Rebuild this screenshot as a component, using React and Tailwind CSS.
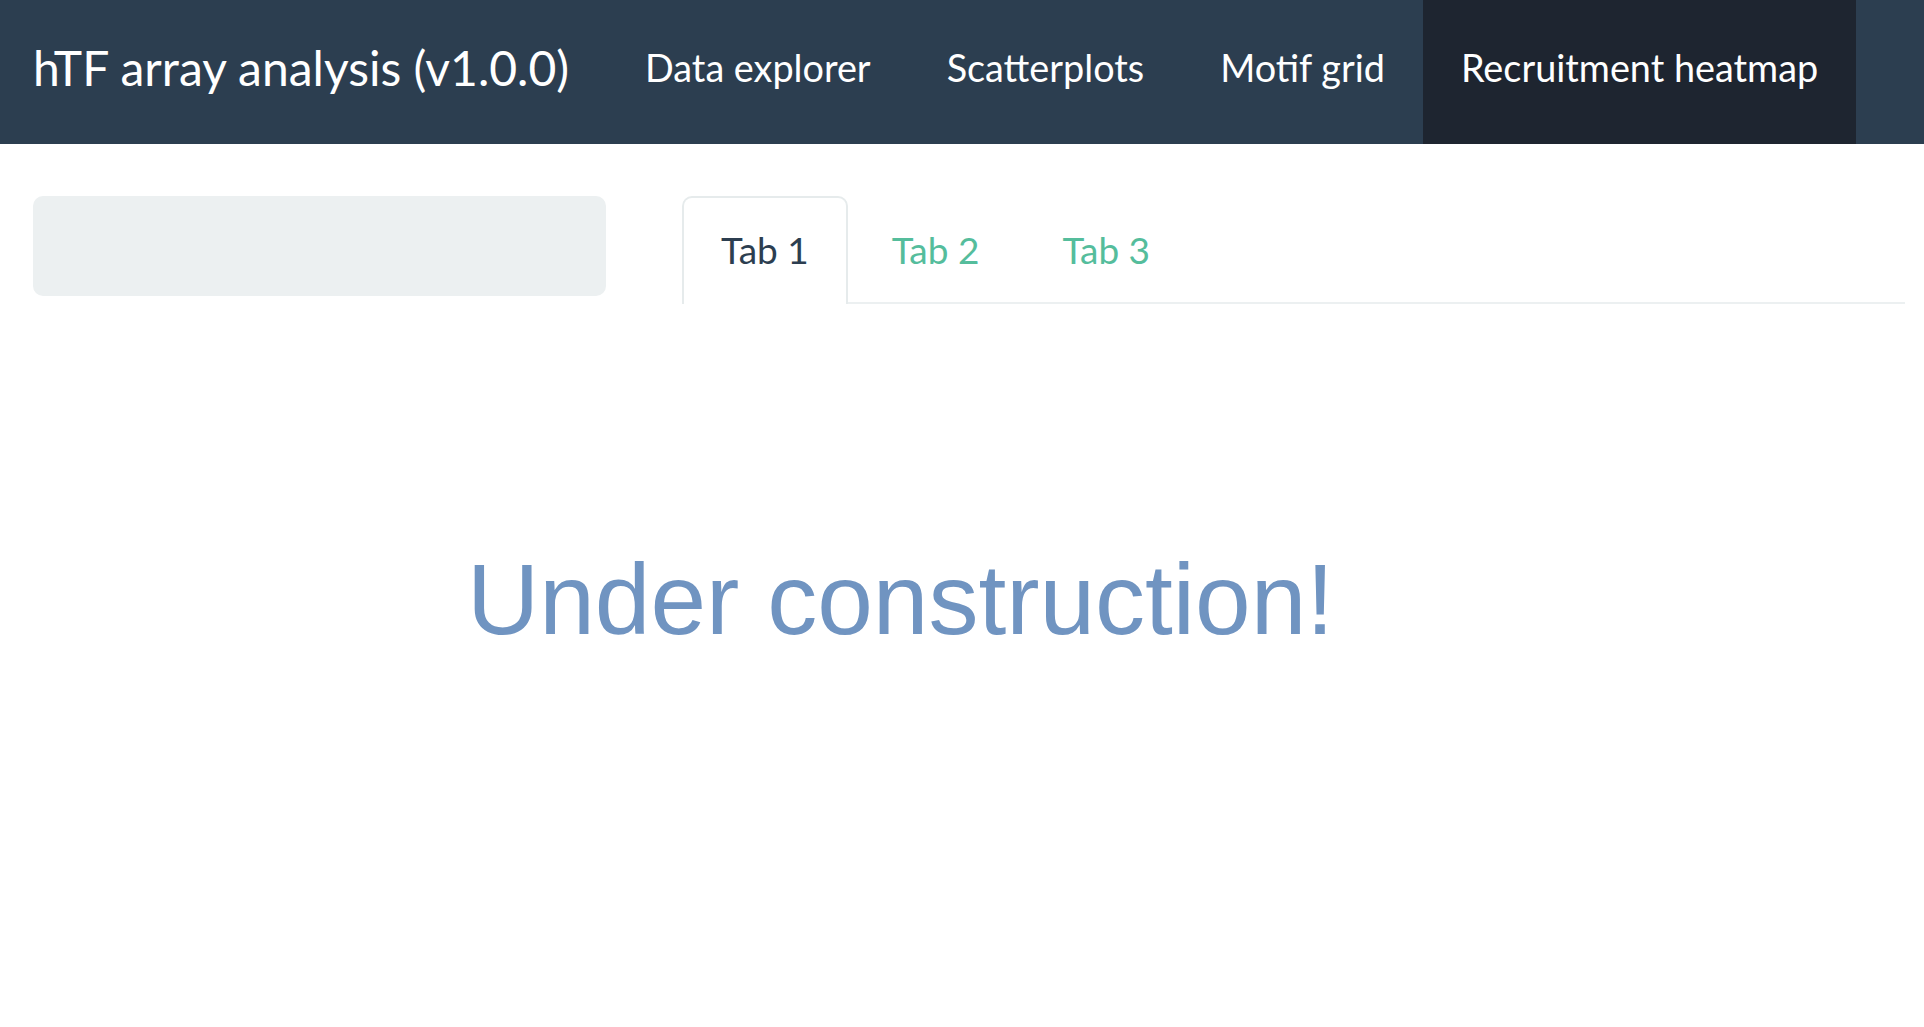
import React from 'react';

const navItems = ['Data explorer', 'Scatterplots', 'Motif grid', 'Recruitment heatmap'];

export default function App() {
  const active = 'Recruitment heatmap';
  const tabs = ['Tab 1', 'Tab 2', 'Tab 3'];

  return (
    <div className="min-h-screen bg-white font-['Lato','Open_Sans',sans-serif]">
      {/* Navbar */}
      <nav className="flex h-[144px] bg-[#2c3e50] text-white">
        <div className="flex items-center pb-[9px] pl-[33px] pr-[38px] text-[48px] leading-none">
          hTF array analysis (v1.0.0)
        </div>
        <ul className="flex">
          {navItems.map((item) => (
            <li
              key={item}
              className={`flex items-center px-[38px] pb-[8px] text-[37.8px] leading-none ${
                item === active ? 'bg-[#1e2530]' : ''
              }`}
            >
              {item}
            </li>
          ))}
        </ul>
      </nav>

      {/* Body */}
      <div className="flex pt-[52px] pl-[33px] pr-[19px]">
        <aside className="w-[573px] shrink-0">
          <div className="h-[100px] rounded-[10px] bg-[#ecf0f1]" />
        </aside>
        <main className="ml-[76px] flex-1">
          <ul className="flex border-b-[2.4px] border-[#ecf0f1]">
            {tabs.map((t, i) => (
              <li
                key={t}
                className={`mb-[-2.4px] mr-[5px] px-[37px] pt-[27px] pb-[27px] text-[37px] leading-[50px] ${
                  i === 0
                    ? 'rounded-t-[10px] border-x-[2.4px] border-t-[2.4px] border-[#e6ebec] bg-white text-[#2c3e50]'
                    : 'border-[2.4px] border-transparent text-[#55bd9c]'
                }`}
              >
                {t}
              </li>
            ))}
          </ul>
        </main>
      </div>

      {/* Placeholder */}
      <div className="pt-[245px] pl-[467px]">
        <h1 className="font-['Liberation_Sans',Arial,sans-serif] text-[100px] leading-none text-[#7094c1]">
          Under construction!
        </h1>
      </div>
    </div>
  );
}
